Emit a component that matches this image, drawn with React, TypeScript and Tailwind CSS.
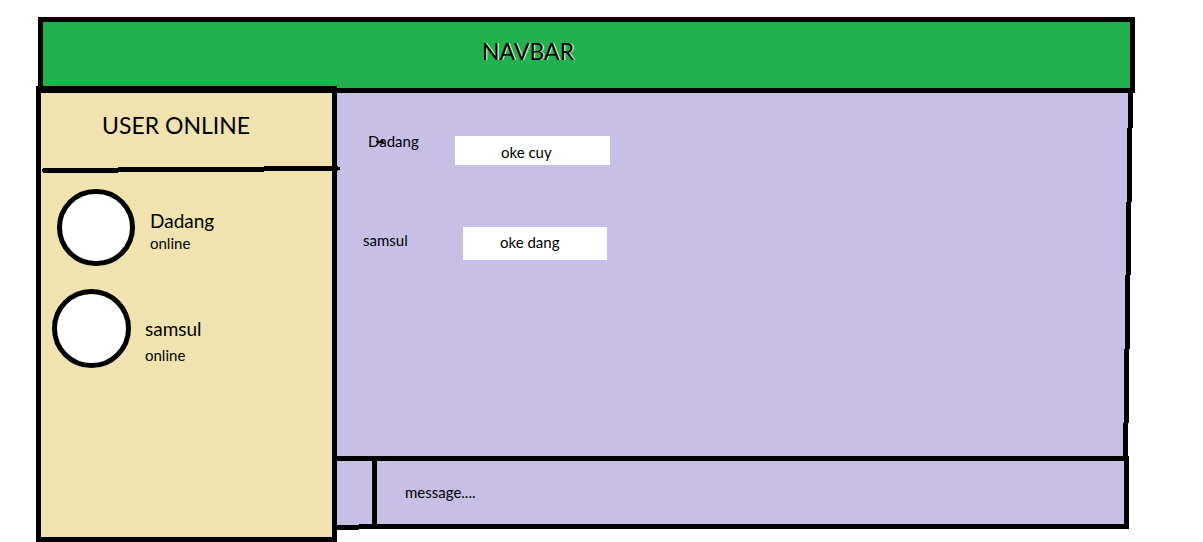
type User = {
  name: string;
  status: string;
  row: string;
  avatar: string;
  text: string;
};

type Message = {
  from: string;
  body: string;
  row: string;
  sender: string;
  bubble: string;
  scribble?: boolean;
};

const users: User[] = [
  {
    name: "Dadang",
    status: "online",
    row: "gap-[15px] pl-4",
    avatar: "h-[77px] w-[78px]",
    text: "pt-5",
  },
  {
    name: "samsul",
    status: "online",
    row: "gap-[14px] pl-[11px]",
    avatar: "h-[79px] w-[79px]",
    text: "gap-1 pt-7",
  },
];

const messages: Message[] = [
  {
    from: "Dadang",
    body: "oke cuy",
    row: "pl-[31px]",
    sender: "w-[87px] -mt-[5px]",
    bubble: "h-[29px] w-[155px] pt-[6px] pl-[46px]",
    scribble: true,
  },
  {
    from: "samsul",
    body: "oke dang",
    row: "pl-[26px]",
    sender: "w-[100px] pt-[3px]",
    bubble: "h-[33px] w-[144px] pt-[5px] pl-[37px]",
  },
];

function Navbar() {
  return (
    <header className="ml-[2px] flex h-[76px] shrink-0 items-center border-5 border-black bg-[#22b14c] pb-2 pl-[439px]">
      <h1 className="text-[23px] [text-shadow:1px_0_0_#ffffff]">NAVBAR</h1>
    </header>
  );
}

function SketchedDivider() {
  return (
    <svg
      className="ml-px block h-[7px] w-[298px] shrink-0"
      viewBox="0 0 298 7"
      shapeRendering="crispEdges"
      aria-hidden="true"
    >
      <path d="M1 2H76V1H222V0H296V1H298V4H296V5H222V6H76V7H1V6H0V3H1Z" />
    </svg>
  );
}

function Sidebar() {
  return (
    <aside className="relative -mt-[7px] flex w-[301px] shrink-0 flex-col border-5 border-t-7 border-black bg-[#efe4b0]">
      <h2 className="flex h-[73px] shrink-0 items-center pb-2 pl-[61px] text-[23px]">
        USER ONLINE
      </h2>
      <SketchedDivider />
      <ul className="flex flex-col gap-[23px] pt-4">
        {users.map((user) => (
          <li key={user.name} className={`flex ${user.row}`}>
            <span
              className={`shrink-0 rounded-full border-5 border-black bg-white ${user.avatar}`}
            />
            <div className={`flex flex-col ${user.text}`}>
              <span className="text-[19px] leading-6">{user.name}</span>
              <span className="text-[15px] leading-5">{user.status}</span>
            </div>
          </li>
        ))}
      </ul>
    </aside>
  );
}

function Conversation() {
  return (
    <div className="mr-[2px] flex flex-1">
      <ul className="flex flex-1 flex-col gap-[62px] bg-[#c8bfe7] pt-[43px]">
        {messages.map((message) => (
          <li key={message.from} className={`flex ${message.row}`}>
            <span className={`relative text-[15px] leading-5 ${message.sender}`}>
              {message.from}
              {message.scribble && (
                <svg
                  className="absolute top-2 left-2 h-[6px] w-[9px]"
                  viewBox="0 0 9 6"
                  aria-hidden="true"
                >
                  <path
                    d="M0 2L2 3.5L5 2.5L7 1.5M3 3.5H8"
                    fill="none"
                    stroke="#000"
                    strokeWidth="1.5"
                  />
                </svg>
              )}
            </span>
            <p className={`bg-white text-[15px] leading-5 ${message.bubble}`}>
              {message.body}
            </p>
          </li>
        ))}
      </ul>
      <svg
        className="block h-auto w-[10px] shrink-0 self-stretch"
        viewBox="0 0 10 363"
        preserveAspectRatio="none"
        shapeRendering="crispEdges"
        aria-hidden="true"
      >
        <path
          d="M0 0H5V35H4V109H3V182H2V256H1V330H0Z"
          fill="#c8bfe7"
        />
        <path d="M5 0H10V35H9V109H8V182H7V256H6V330H5V363H0V330H1V256H2V182H3V109H4V35H5Z" />
      </svg>
    </div>
  );
}

function Composer() {
  return (
    <form className="mr-[6px] flex h-[74px] shrink-0 items-start">
      <div className="h-[74px] w-[22px] border-y-5 border-black bg-[#c8bfe7]" />
      <div className="h-[73px] w-[13px] border-y-5 border-black bg-[#c8bfe7]" />
      <input
        type="text"
        aria-label="message"
        placeholder="message...."
        className="h-[73px] min-w-0 flex-1 rounded-none border-5 border-black bg-[#c8bfe7] pb-[2px] pl-7 text-[15px] text-black outline-none placeholder:text-black placeholder:opacity-100"
      />
    </form>
  );
}

export default function App() {
  return (
    <div className="flex min-h-screen flex-col bg-white pt-[17px] pr-[68px] pl-9 font-['Lato','Open_Sans',sans-serif] text-black">
      <Navbar />
      <div className="flex flex-1">
        <Sidebar />
        <main className="mb-3 flex min-w-0 flex-1 flex-col">
          <Conversation />
          <Composer />
        </main>
      </div>
    </div>
  );
}
